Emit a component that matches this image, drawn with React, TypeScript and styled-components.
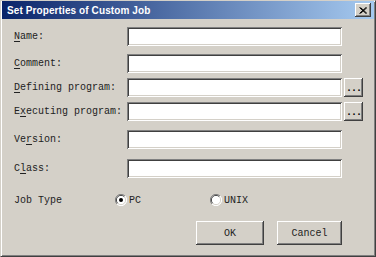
import React from "react";
import styled, { createGlobalStyle } from "styled-components";

const Global = createGlobalStyle`
  html, body { margin: 0; padding: 0; background: #d4d0c8; }
  * { box-sizing: border-box; }
`;

const Window = styled.div`
  width: 376px;
  height: 257px;
  background: #d4d0c8;
  border-style: solid;
  border-width: 1px;
  border-color: #d4d0c8 #404040 #404040 #d4d0c8;
  box-shadow: inset 1px 1px #ffffff, inset -1px -1px #808080;
  display: flex;
  flex-direction: column;
  font-family: "Liberation Mono", "DejaVu Sans Mono", monospace;
  font-size: 10px;
  color: #000;
`;

const TitleBar = styled.div`
  height: 18px;
  margin: 0 1px;
  background: linear-gradient(to right, #0a246a, #a6caf0);
  display: flex;
  align-items: center;
  justify-content: space-between;
  padding: 0 3px 0 5px;
`;

const Title = styled.span`
  font-family: "Liberation Sans", Arial, sans-serif;
  font-weight: bold;
  font-size: 10px;
  letter-spacing: 0.1px;
  color: #fff;
`;

const CloseButton = styled.div`
  width: 16px;
  height: 14px;
  background: #d4d0c8;
  box-shadow: inset -1px -1px #404040, inset 1px 1px #ffffff,
    inset -2px -2px #808080, inset 2px 2px #d4d0c8;
  display: flex;
  align-items: center;
  justify-content: center;
`;

const Body = styled.div`
  display: flex;
  flex-direction: column;
  padding-left: 13px;
`;

const Row = styled.div<{ $gap: number }>`
  display: grid;
  grid-template-columns: 111px 215px 19px;
  column-gap: 2px;
  align-items: center;
  height: 19px;
  margin-top: ${(p) => p.$gap}px;
`;

const Label = styled.label`
  white-space: nowrap;
  color: #222;
  u { text-decoration-thickness: 1px; text-underline-offset: 2px; }
`;

const Field = styled.div`
  height: 19px;
  background: #fff;
  box-shadow: inset 1px 1px #808080, inset -1px -1px #ffffff,
    inset 2px 2px #404040, inset -2px -2px #d4d0c8;
`;

const Raised = styled.div`
  background: #d4d0c8;
  box-shadow: inset -1px -1px #404040, inset 1px 1px #ffffff,
    inset -2px -2px #808080, inset 2px 2px #d4d0c8;
  display: flex;
  align-items: center;
  justify-content: center;
`;

const Browse = styled(Raised)`
  height: 19px;
  align-items: flex-end;
  padding-bottom: 5px;
  font-weight: bold;
  letter-spacing: -1px;
  line-height: 6px;
`;

const JobRow = styled.div`
  display: flex;
  align-items: center;
  height: 12px;
  margin-top: 16px;
  color: #222;
`;

const JobLabel = styled.span`
  width: 101px;
`;

const Option = styled.span<{ $width: number }>`
  display: flex;
  align-items: center;
  gap: 2px;
  width: ${(p) => p.$width}px;
`;

const ButtonRow = styled.div`
  display: flex;
  gap: 13px;
  margin-top: 15px;
  padding-left: 182px;
`;

const PushButton = styled(Raised)<{ $width: number }>`
  width: ${(p) => p.$width}px;
  height: 24px;
  color: #222;
`;

const Radio = ({ checked }: { checked?: boolean }) => (
  <svg width="12" height="12" viewBox="0 0 12 12">
    <circle cx="6" cy="6" r="5.5" fill="#fff" />
    <path d="M10 2 A5.5 5.5 0 0 0 2 10" fill="none" stroke="#808080" strokeWidth="1" />
    <path d="M9.3 2.7 A4.6 4.6 0 0 0 2.7 9.3" fill="none" stroke="#404040" strokeWidth="1" />
    <path d="M10 2 A5.5 5.5 0 0 1 2 10" fill="none" stroke="#ffffff" strokeWidth="1" />
    <path d="M9.3 2.7 A4.6 4.6 0 0 1 2.7 9.3" fill="none" stroke="#d4d0c8" strokeWidth="1" />
    {checked && <circle cx="6" cy="6" r="2" fill="#000" />}
  </svg>
);

const rows: { label: React.ReactNode; gap: number; browse?: boolean }[] = [
  { label: <><u>N</u>ame:</>, gap: 8 },
  { label: <><u>C</u>omment:</>, gap: 8 },
  { label: <><u>D</u>efining program:</>, gap: 5, browse: true },
  { label: <>E<u>x</u>ecuting program:</>, gap: 5, browse: true },
  { label: <>Ve<u>r</u>sion:</>, gap: 9 },
  { label: <>C<u>l</u>ass:</>, gap: 10 },
];

export default function App() {
  return (
    <>
      <Global />
      <Window>
        <TitleBar>
          <Title>Set Properties of Custom Job</Title>
          <CloseButton>
            <svg width="8" height="7" viewBox="0 0 8 7">
              <path d="M0.5 0.5 L7 6.5 M1.5 0.5 L8 6.5 M7 0.5 L0.5 6.5 M8 0.5 L1.5 6.5" stroke="#000" strokeWidth="1" />
            </svg>
          </CloseButton>
        </TitleBar>
        <Body>
          {rows.map((r, i) => (
            <Row key={i} $gap={r.gap}>
              <Label>{r.label}</Label>
              <Field />
              {r.browse ? <Browse>...</Browse> : <span />}
            </Row>
          ))}
          <JobRow>
            <JobLabel>Job Type</JobLabel>
            <Option $width={95}>
              <Radio checked />
              PC
            </Option>
            <Option $width={60}>
              <Radio />
              UNIX
            </Option>
          </JobRow>
          <ButtonRow>
            <PushButton $width={68}>OK</PushButton>
            <PushButton $width={65}>Cancel</PushButton>
          </ButtonRow>
        </Body>
      </Window>
    </>
  );
}
